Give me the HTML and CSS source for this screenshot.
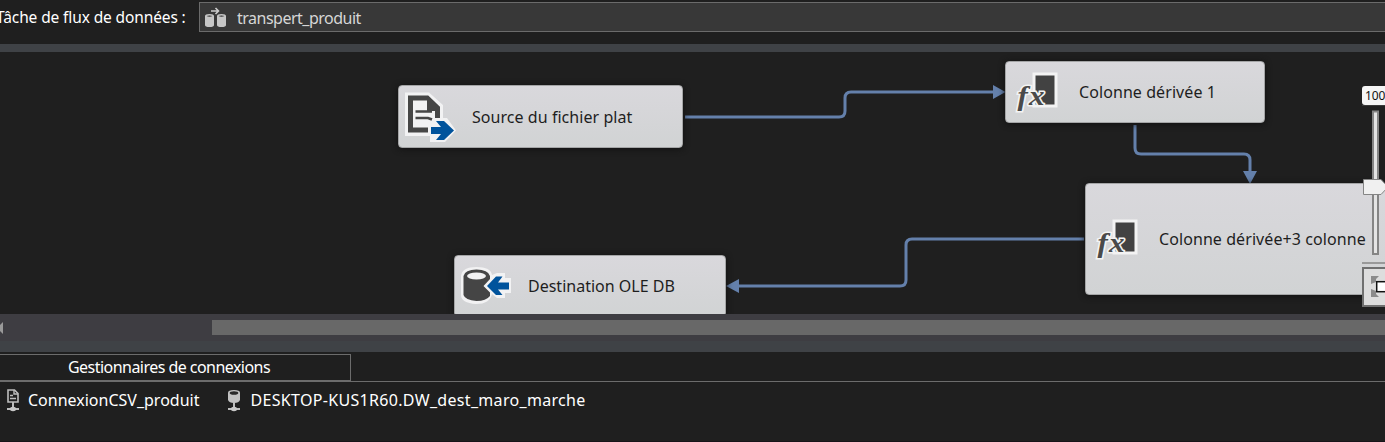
FILE: index.html
```html
<!DOCTYPE html>
<html lang="fr">
<head>
<meta charset="utf-8">
<title>Flux de données</title>
<link rel="stylesheet" href="styles.css">
</head>
<body>
<div class="designer">
  <header class="task-bar">
    <span class="task-label">Tâche de flux de données :</span>
    <div class="task-select">
      <svg class="task-icon" width="24" height="22" viewBox="0 0 24 22">
        <path d="M7 4h7M11.500 1l3 3-3 3" fill="none" stroke="#ccc" stroke-width="1.6"/>
        <path d="M1 9q0-2 4.500-2T10 9v9q0 2-4.500 2T1 18zM13 9q0-2 4.500-2T22 9v9q0 2-4.500 2T13 18z" fill="#c6c6c6"/>
        <path d="M2.500 9q3-1.200 6 0-3 1.500-6 0M14.500 9q3-1.200 6 0-3 1.500-6 0" fill="#333"/>
      </svg>
      <span class="task-name">transpert_produit</span>
    </div>
  </header>
  <div class="splitter"></div>
  <main class="canvas">
    <svg class="links" width="1385" height="262" viewBox="0 52 1385 262">
      <g fill="none" stroke="#6480ab" stroke-width="3">
        <path d="M685 117H839q6 0 6-6V98q0-6 6-6H994"/>
        <path d="M1135 125V148q0 6 6 6H1244q6 0 6 6V172"/>
        <path d="M1084 239H912q-6 0-6 6V280q0 6-6 6H738"/>
      </g>
      <path d="M993 85v14L1005.500 92zM1243 171h14L1250 184zM739 279v14L726 286z" fill="#6480ab"/>
    </svg>

    <div class="node node-source">
      <svg class="node-icon" width="56" height="54" viewBox="0 0 56 54">
        <path d="M5 2.500H29L43 15V28H47L56 40.500 45 52H30V46H5z" fill="#f2f2f3"/>
        <path d="M8 5.500H28L40 17V28H35V21H27V10.500H13V37.500H28V42.500H8z" fill="#464646"/>
        <path d="M28 5.500L40 17V21H27V9z" fill="#464646"/>
        <path d="M15.500 21.500H32M15.500 28H28L32 29.500" fill="none" stroke="#464646" stroke-width="2.700"/>
        <path d="M31 37H41L36 31H44L54 40.500 44 50H36L41 44H31z" fill="#00539c"/>
      </svg>
      <span class="node-text">Source du fichier plat</span>
    </div>
    <div class="node node-derived">
      <svg class="node-icon" width="56" height="54" viewBox="0 0 56 54">
        <path d="M26.500 7.500H51.500V42.500H26.500z" fill="#f3f3f3"/><path d="M29.500 10.500H48.500V39.500H29.500z" fill="#424242"/>
        <text class="fx" transform="translate(11.500 39.500) scale(1.150 1)">f<tspan dx="1">x</tspan></text>
      </svg>
      <span class="node-text">Colonne dérivée 1</span>
    </div>
    <div class="node node-derived-more">
      <svg class="node-icon" width="56" height="54" viewBox="0 0 56 54">
        <path d="M26.500 7.500H51.500V42.500H26.500z" fill="#f3f3f3"/><path d="M29.500 10.500H48.500V39.500H29.500z" fill="#424242"/>
        <text class="fx" transform="translate(11.500 39.500) scale(1.150 1)">f<tspan dx="1">x</tspan></text>
      </svg>
      <span class="node-text">Colonne dérivée+3 colonne</span>
    </div>
    <div class="node node-destination">
      <svg class="node-icon" width="56" height="54" viewBox="0 0 56 54">
        <path d="M6 17Q7 8 21.500 8T37 16L42 14H50V19H56V34H50V39H42L37 35Q35 45 21 45 6 44 6 36z" fill="#f2f2f3"/>
        <path d="M8.500 17Q10 10.500 21.500 10.500T35 17V20L28.500 27 35 33.500V37Q31 42 21.500 42 10 41 8.500 36z" fill="#454545"/>
        <ellipse cx="21.500" cy="17" rx="9.500" ry="3.500" fill="#f1f1f2"/>
        <path d="M32 27L41 17.500H47.500L43 23.500H54V30.500H43L47.500 36H41z" fill="#00539c"/>
      </svg>
      <span class="node-text">Destination OLE DB</span>
    </div>

    <aside class="zoom-panel">
      <div class="zoom-value">100</div>
      <svg width="23" height="202" viewBox="1362 105 23 202">
        <path d="M1362 105h23" stroke="#555"/>
        <rect x="1373" y="111.500" width="5" height="142.500" fill="#e4e4e4" stroke="#858585" stroke-width="2"/>
        <path d="M1363.500 179.500H1381L1388 187 1381 194.500H1363.500z" fill="#f0f0f0" stroke="#858585"/>
        <path d="M1362 263h23" stroke="#999" stroke-width="2"/>
        <rect x="1363" y="268" width="30" height="38" fill="#ddd" stroke="#707070" stroke-width="2"/>
        <path d="M1371 276H1379L1376 279V282L1371 284zM1371 297H1379L1376 294V291L1371 289z" fill="#8b8b8b"/>
        <rect x="1376.700" y="281.700" width="14" height="10" fill="#fff" stroke="#111" stroke-width="1.500"/>
      </svg>
    </aside>
  </main>
  <div class="scrollbar">
    <svg class="scroll-arrow" width="4" height="14" viewBox="0 0 4 14"><path d="M3 1V13L-3 7z" fill="#999"/></svg>
    <div class="scroll-thumb"></div>
  </div>
  <div class="splitter splitter-low"></div>
  <section class="connections">
    <div class="tabs"><div class="tab"><span class="tab-text">Gestionnaires de connexions</span></div></div>
    <div class="connection-list">
      <div class="connection">
        <svg width="14" height="24" viewBox="0 0 14 24">
          <path d="M2 2H8.500L12 5.500V14H2z" fill="none" stroke="#bdbdbd" stroke-width="1.600"/>
          <path d="M8 2V6H12M4 7.500H7M4 10.500H10" fill="none" stroke="#bdbdbd" stroke-width="1.400"/>
          <path d="M7 14V19M1 21H13" stroke="#bdbdbd" stroke-width="2"/><ellipse cx="7" cy="21" rx="3" ry="2.200" fill="#c8c8c8"/>
        </svg>
        <span class="connection-name">ConnexionCSV_produit</span>
      </div>
      <div class="connection">
        <svg width="14" height="24" viewBox="0 0 14 24">
          <path d="M1 4.500Q1 2 7 2T13 4.500V12Q12 15 7 15T1 12z" fill="#c2c2c2"/>
          <ellipse cx="7" cy="5" rx="4.300" ry="1.800" fill="#292929"/>
          <path d="M7 14V19M1 21H13" stroke="#bdbdbd" stroke-width="2"/><ellipse cx="7" cy="21" rx="3" ry="2.200" fill="#c8c8c8"/>
        </svg>
        <span class="connection-name db-name">DESKTOP-KUS1R60.DW_dest_maro_marche</span>
      </div>
    </div>
  </section>
</div>
</body>
</html>
```
FILE: styles.css
```css
* { box-sizing: border-box; }
body {
  margin: 0;
  background: #1f1f1f;
  color: #fff;
  font: 16px/20px Tahoma, "Noto Sans", sans-serif;
}
svg { display: block; flex: none; }
.designer {
  display: flex;
  flex-direction: column;
  width: 1385px;
  height: 442px;
  overflow: hidden;
  white-space: nowrap;
  border-bottom: 1px solid #171419;
}
.task-bar { display: flex; height: 44px; flex: none; }
.task-label { width: 203px; margin: 7px 0 0 -4px; font-size: 15.5px; letter-spacing: -0.12px; }
.task-select {
  display: flex;
  flex: 1;
  height: 30px;
  margin-top: 2px;
  padding-left: 4px;
  gap: 9px;
  background: #383838;
  border: 1px solid #6b6b6b;
  border-right: 0;
}
.task-icon { margin-top: 4px; }
.task-name { margin-top: 5px; color: #d6d6d6; letter-spacing: -0.5px; }
.splitter { flex: none; height: 8px; background: #3f4246; }
.splitter-low { height: 11px; }
.canvas { position: relative; flex: none; height: 262px; overflow: hidden; }
.links { position: absolute; left: 0; top: 0; }
.node {
  position: absolute;
  display: flex;
  align-items: center;
  border: 1px solid #a4a5a6;
  border-radius: 4px;
  background: linear-gradient(#d9d8dc, #d1d3d4);
  box-shadow: 0 1px 6px #111;
  color: #1e1e1e;
  letter-spacing: 0.08px;
}
.node-icon { margin-right: 17px; }
.node-source { left: 398px; top: 33px; width: 285px; height: 63px; padding-left: 1px; letter-spacing: 0.05px; }
.node-source .node-icon { margin-right: 16px; }
.node-derived { left: 1005px; top: 9px; width: 260px; height: 62px; }
.node-derived-more { left: 1085px; top: 131px; width: 310px; height: 112px; }
.node-destination { left: 454px; top: 203px; width: 272px; height: 62px; letter-spacing: 0; }
.fx {
  font: italic bold 27px "Liberation Serif", serif;
  fill: #4a4a4a;
  stroke: #f3f3f3;
  stroke-width: 3px;
  paint-order: stroke;
  letter-spacing: 0;
}
.zoom-panel { position: absolute; left: 1362px; top: 34px; width: 23px; overflow: hidden; }
.zoom-value {
  height: 19px;
  padding-left: 3px;
  background: #f5f5f5;
  border-radius: 3px 0 0 3px;
  color: #111;
  font-size: 12px;
  line-height: 19px;
  letter-spacing: -0.1px;
}
.scrollbar { display: flex; flex: none; height: 27px; padding-top: 6px; background: #3e3d42; }
.scroll-arrow { margin: 1px 208px 0 0; }
.scroll-thumb { flex: 1; height: 15px; background: #686868; }
.connections { padding-top: 2px; }
.tabs { height: 28px; border-bottom: 1px solid #6c6c6c; }
.tab {
  width: 351px;
  height: 27px;
  padding: 2px 0 0 68px;
  border: 1px solid #6c6c6c;
  border-left: 0;
}
.tab-text { letter-spacing: -0.54px; }
.connection-list { display: flex; padding: 6px 0 0 6px; gap: 28px; }
.connection { display: flex; gap: 8px; }
.connection-name { margin-top: 2px; }
.db-name { margin-left: 1px; letter-spacing: 0.32px; }
```
